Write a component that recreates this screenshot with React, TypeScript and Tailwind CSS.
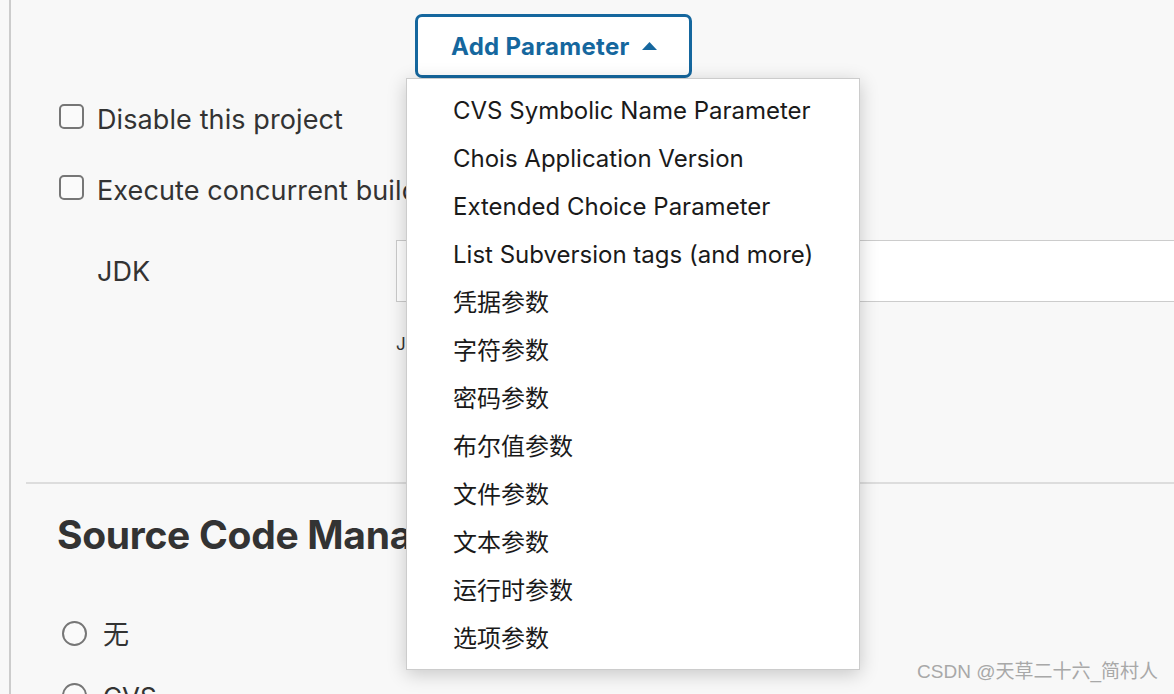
import React from "react";

const ITEMS = [
  "CVS Symbolic Name Parameter",
  "Chois Application Version",
  "Extended Choice Parameter",
  "List Subversion tags (and more)",
  "凭据参数",
  "字符参数",
  "密码参数",
  "布尔值参数",
  "文件参数",
  "文本参数",
  "运行时参数",
  "选项参数",
];

const FONT = { fontFamily: 'Inter, "Noto Sans CJK SC", sans-serif' };

function Checkbox({ label }: { label: string }) {
  return (
    <label className="flex items-center gap-[13px] h-[25px]">
      <span className="w-[25px] h-[25px] rounded-[5px] border-2 border-[#767676] bg-[#fafafa] shrink-0" />
      <span className="text-[27px] text-[#333] whitespace-nowrap leading-none pt-[5px] tracking-[0.1px]">{label}</span>
    </label>
  );
}

function Radio({ label }: { label: string }) {
  return (
    <label className="flex items-center gap-[16px] h-[25px]">
      <span className="w-[25px] h-[25px] rounded-full border-2 border-[#767676] bg-[#fafafa] shrink-0" />
      <span className="text-[26px] text-[#333] whitespace-nowrap leading-none pt-[3px]">{label}</span>
    </label>
  );
}

export default function App() {
  return (
    <div className="relative w-full h-[694px] overflow-hidden bg-[#f8f8f8]" style={FONT}>
      <div className="ml-[9px] h-full border-l-2 border-[#cccccc]">
        {/* add parameter button */}
        <div className="pl-[404px] pt-[14px]">
          <button className="w-[277px] h-[64px] rounded-[7px] border-[3px] border-[#15679e] bg-white flex items-center pl-[33px] gap-[12px] text-[#15679e]">
            <span className="text-[24px] font-bold tracking-[0.3px] pt-[2px]">Add Parameter</span>
            <svg width="15" height="8" viewBox="0 0 15 8" className="mt-[-1px]">
              <polygon points="0,8 7.5,0 15,8" fill="#15679e" />
            </svg>
          </button>
        </div>

        {/* options */}
        <div className="pl-[48px] pt-[26px] flex flex-col gap-[46px]">
          <Checkbox label="Disable this project" />
          <Checkbox label="Execute concurrent builds if necessary" />
        </div>

        {/* JDK */}
        <div className="flex mt-[40px]">
          <div className="w-[385px] pl-[86px] pt-[12px] text-[27px] text-[#333]">JDK</div>
          <div className="flex-1 flex flex-col">
            <div className="h-[62px] border border-[#cccccc] border-r-0 bg-white" />
            <div className="pt-[30px] text-[17px] text-[#333] whitespace-nowrap">
              JDK to be used for this project
            </div>
          </div>
        </div>

        <div className="ml-[15px] mt-[124px] border-t-2 border-[#dddddd]" />

        <h2 className="pl-[46px] pt-[31px] text-[39px] font-bold text-[#333] leading-none tracking-[-0.3px] whitespace-nowrap">
          Source Code Management
        </h2>

        <div className="pl-[51px] pt-[67px] flex flex-col gap-[37px]">
          <Radio label="无" />
          <Radio label="CVS" />
        </div>
      </div>

      {/* dropdown menu */}
      <div className="absolute left-[406px] top-[78px] w-[454px] bg-white border border-[#cccccc] pt-[8px] pb-[6px] shadow-[0_4px_18px_rgba(0,0,0,0.2)]">
        {ITEMS.map((item) => (
          <div key={item} className="h-[48px] flex items-center pl-[46px] text-[24px] text-[#1a1a1a] whitespace-nowrap">
            {item}
          </div>
        ))}
      </div>

      <div className="absolute right-[16px] bottom-[8px] text-[19px] text-[#a8a8a8] whitespace-nowrap" style={{ fontFamily: '"Liberation Sans", "Noto Sans CJK SC", sans-serif' }}>
        CSDN @天草二十六_简村人
      </div>
    </div>
  );
}
